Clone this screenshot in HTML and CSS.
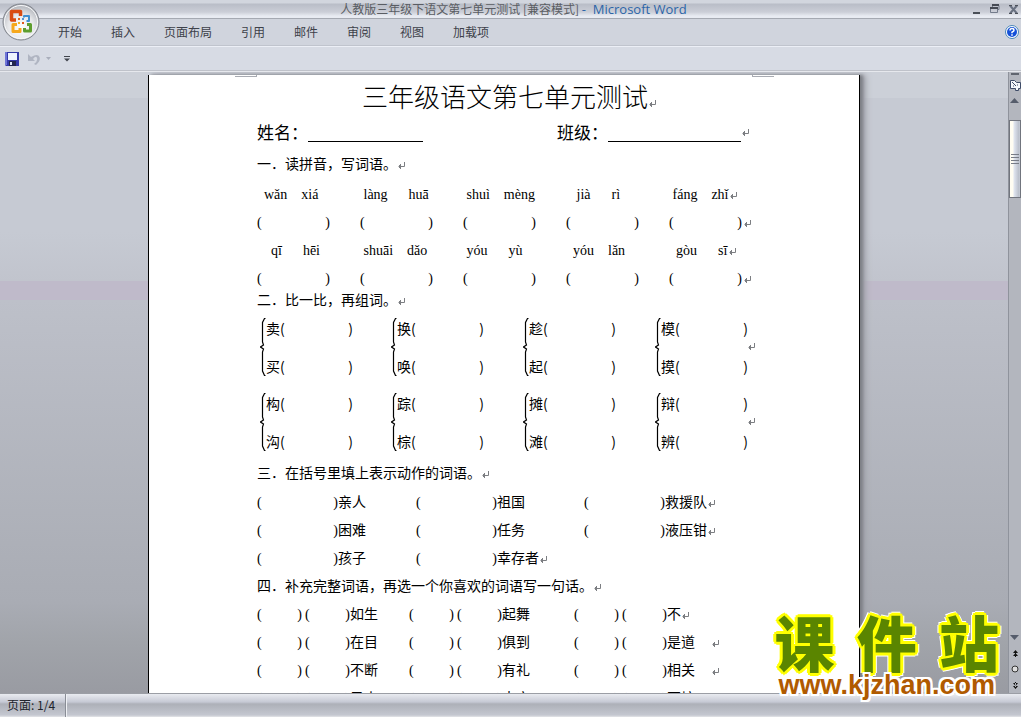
FILE: index.html
```html
<!DOCTYPE html>
<html lang="zh-CN">
<head>
<meta charset="utf-8">
<title>人教版三年级下语文第七单元测试 - Microsoft Word</title>
<link rel="stylesheet" href="styles.css">
</head>
<body>
<svg class="defs" aria-hidden="true">
  <symbol id="ret" viewBox="0 0 8 7"><path d="M7.500 0v4.500H1.500M3.500 2v5M2.500 3v3" fill="none" stroke="#7c7e82"/></symbol>
  <symbol id="brace" viewBox="0 0 6 58"><path d="M5.500 .5H4.500L2.500 4.500V24L3.500 27 .5 29 3.500 31 2.500 34V53L4.500 57.500H5.500" fill="none" stroke="#000" stroke-width="1.200"/></symbol>
</svg>
<div class="app">
  <header class="top">
    <div class="titlebar">
      <h1 class="title">人教版三年级下语文第七单元测试 [兼容模式] <span class="brand">- &nbsp;Microsoft Word</span></h1>
      <div class="controls">
        <button class="plain" aria-label="最小化"><svg width="8" height="10"><path d="M0 8h7v2H0z" fill="#4b5058"/></svg></button>
        <button class="plain" aria-label="还原"><svg width="10" height="10"><path d="M2.500 5V1.500H9V5.500H7.500M.5 4.500h7v4h-7z" fill="none" stroke="#737b8b"/><path d="M2 1h7M0 4h8" stroke="#454a54" stroke-width="2"/></svg></button>
        <button class="plain" aria-label="关闭"><svg width="9" height="9"><path d="M1 .5l7 8M8 .5l-7 8" stroke="#687080" stroke-width="2"/><path d="M0 .5h3M6 .5h3M0 8.500h3M6 8.500h3" stroke="#4b5058"/></svg></button>
      </div>
    </div>
    <nav class="tabs">
      <button class="plain tab">开始</button><button class="plain tab">插入</button><button class="plain tab">页面布局</button><button class="plain tab">引用</button><button class="plain tab">邮件</button><button class="plain tab">审阅</button><button class="plain tab">视图</button><button class="plain tab">加载项</button>
      <button class="plain help" aria-label="帮助"><svg width="14" height="14"><circle cx="7" cy="7" r="6.500" fill="#fff" stroke="#4a86b8"/><circle cx="7" cy="7" r="5" fill="#1450d8"/><path d="M5 5.500Q5 3.500 7 3.500T9 5.200Q9 6.200 7 7.200V8.200M7 9.300v1.500" fill="none" stroke="#fff" stroke-width="1.500"/></svg></button>
    </nav>
    <div class="quick">
      <button class="plain" aria-label="保存"><svg width="14" height="14"><path d="M0 0h14v14H1l-1-1z" fill="#3439a8"/><path d="M0 0h2v13H0z" fill="#6f76d6"/><path d="M3 1h9v7H3z" fill="#eef3ff"/><path d="M4 9h7v5H4z" fill="#22264f"/><path d="M5 10h2v3H5z" fill="#dfe6fa"/></svg></button>
      <button class="plain undo" aria-label="撤消"><svg width="12" height="12"><path d="M0 1v7h7L5 6Q8 2 9 5T6 11L8 12Q13 8 11.500 4T3 4z" fill="#b0b5c2"/></svg></button>
      <button class="plain" aria-label="撤消列表"><svg width="6" height="4"><path d="M0 0h5L2.500 3z" fill="#a9aebb"/></svg></button>
      <button class="plain more" aria-label="自定义"><svg width="6" height="6"><path d="M0 .5h6" stroke="#41454d"/><path d="M0 2.500h6L3 5.500z" fill="#41454d"/></svg></button>
    </div>
    <button class="plain office" aria-label="Office 按钮"><svg width="38" height="38" viewBox="0 0 38 38">
      <defs><radialGradient id="orb" cx=".5" cy=".65" r=".6"><stop offset="0" stop-color="#fff"/><stop offset=".6" stop-color="#e6e7ea"/><stop offset="1" stop-color="#b4b7bd"/></radialGradient></defs>
      <circle cx="19" cy="19" r="18" fill="url(#orb)" stroke="#80848c"/><circle cx="19" cy="19" r="16.500" fill="none" stroke="#f7f8fa"/>
      <g fill="none" stroke-linejoin="round"><path d="M14 17H9.500V8.500H18.500V13" stroke="#d94b12" stroke-width="3.500"/><path d="M22 14.500V13H27V18H24.500" stroke="#3f8fd2" stroke-width="2"/><path d="M15 21.500H11V28.500H18V25" stroke="#f6a81c" stroke-width="3"/><path d="M25 21.500H28.500V28H22.500V25" stroke="#5e9e2e" stroke-width="3"/></g>
      <g fill="#e2661b"><path d="M16 15h2v2h-2z"/><path d="M20 15h2v2h-2z" fill="#4f93d6"/><path d="M16 19h2v2h-2z" fill="#f5b02a"/><path d="M20 19h2v2h-2z" fill="#e35a1c"/></g>
    </svg></button>
  </header>

  <div class="work">
    <main class="canvas">
      <article class="page">
        <i class="crop"></i><i class="crop right"></i>
        <h2 class="doc-title">三年级语文第七单元测试<svg class="ret"><use href="#ret"/></svg></h2>
        <div class="names"><span class="field">姓名：<i class="rule"></i></span><span class="field">班级：<i class="rule long"></i><svg class="ret"><use href="#ret"/></svg></span></div>

        <h3 class="head first">一．读拼音，写词语。<svg class="ret"><use href="#ret"/></svg></h3>
        <p class="row five"><span>  wǎn    xiá</span><span> làng      huā</span><span> shuì    mèng</span><span>   jià      rì</span><span> fáng    zhǐ<svg class="ret"><use href="#ret"/></svg></span></p>
        <p class="row five"><span><b class="blank">( )</b></span><span><b class="blank">( )</b></span><span><b class="blank">( )</b></span><span><b class="blank">( )</b></span><span><b class="blank">( )</b><svg class="ret"><use href="#ret"/></svg></span></p>
        <p class="row five"><span>    qī      hēi</span><span> shuāi    dǎo</span><span> yóu      yù</span><span>  yóu    lǎn</span><span>  gòu      sī<svg class="ret"><use href="#ret"/></svg></span></p>
        <p class="row five"><span><b class="blank">( )</b></span><span><b class="blank">( )</b></span><span><b class="blank">( )</b></span><span><b class="blank">( )</b></span><span><b class="blank">( )</b><svg class="ret"><use href="#ret"/></svg></span></p>

        <h3 class="head tight">二．比一比，再组词。<svg class="ret"><use href="#ret"/></svg></h3>
        <div class="pairs">
          <div class="pair"><svg class="brace"><use href="#brace"/></svg><div class="two"><p>卖<b class="blank">( )</b></p><p>买<b class="blank">( )</b></p></div></div>
          <div class="pair"><svg class="brace"><use href="#brace"/></svg><div class="two"><p>换<b class="blank">( )</b></p><p>唤<b class="blank">( )</b></p></div></div>
          <div class="pair"><svg class="brace"><use href="#brace"/></svg><div class="two"><p>趁<b class="blank">( )</b></p><p>起<b class="blank">( )</b></p></div></div>
          <div class="pair"><svg class="brace"><use href="#brace"/></svg><div class="two"><p>模<b class="blank">( )</b></p><p>摸<b class="blank">( )</b></p></div><svg class="ret"><use href="#ret"/></svg></div>
        </div>
        <div class="pairs">
          <div class="pair"><svg class="brace"><use href="#brace"/></svg><div class="two"><p>构<b class="blank">( )</b></p><p>沟<b class="blank">( )</b></p></div></div>
          <div class="pair"><svg class="brace"><use href="#brace"/></svg><div class="two"><p>踪<b class="blank">( )</b></p><p>棕<b class="blank">( )</b></p></div></div>
          <div class="pair"><svg class="brace"><use href="#brace"/></svg><div class="two"><p>摊<b class="blank">( )</b></p><p>滩<b class="blank">( )</b></p></div></div>
          <div class="pair"><svg class="brace"><use href="#brace"/></svg><div class="two"><p>辩<b class="blank">( )</b></p><p>辨<b class="blank">( )</b></p></div><svg class="ret"><use href="#ret"/></svg></div>
        </div>

        <h3 class="head">三．在括号里填上表示动作的词语。<svg class="ret"><use href="#ret"/></svg></h3>
        <p class="row three"><span><b class="blank">( )</b>亲人</span><span><b class="blank">( )</b>祖国</span><span><b class="blank">( )</b>救援队<svg class="ret"><use href="#ret"/></svg></span></p>
        <p class="row three"><span><b class="blank">( )</b>困难</span><span><b class="blank">( )</b>任务</span><span><b class="blank">( )</b>液压钳<svg class="ret"><use href="#ret"/></svg></span></p>
        <p class="row three"><span><b class="blank">( )</b>孩子</span><span><b class="blank">( )</b>幸存者<svg class="ret"><use href="#ret"/></svg></span></p>

        <h3 class="head low">四．补充完整词语，再选一个你喜欢的词语写一句话。<svg class="ret"><use href="#ret"/></svg></h3>
        <p class="row idiom"><span><b class="blank">( )</b><b class="blank">( )</b>如生</span><span><b class="blank">( )</b><b class="blank">( )</b>起舞</span><span><b class="blank">( )</b><b class="blank">( )</b>不<svg class="ret"><use href="#ret"/></svg></span></p>
        <p class="row idiom"><span><b class="blank">( )</b><b class="blank">( )</b>在目</span><span><b class="blank">( )</b><b class="blank">( )</b>俱到</span><span><b class="blank">( )</b><b class="blank">( )</b>是道<svg class="ret far"><use href="#ret"/></svg></span></p>
        <p class="row idiom"><span><b class="blank">( )</b><b class="blank">( )</b>不断</span><span><b class="blank">( )</b><b class="blank">( )</b>有礼</span><span><b class="blank">( )</b><b class="blank">( )</b>相关<svg class="ret far"><use href="#ret"/></svg></span></p>
        <p class="row idiom"><span><b class="blank">( )</b><b class="blank">( )</b>异士</span><span><b class="blank">( )</b><b class="blank">( )</b>大方</span><span><b class="blank">( )</b><b class="blank">( )</b>不惊<svg class="ret far"><use href="#ret"/></svg></span></p>
      </article>
    </main>
    <aside class="scroll">
      <i class="split"></i>
      <button class="plain ruler" aria-label="标尺"><svg width="12" height="13"><path d="M1.500 2.500h4l2 2h4v6h-2v2h-3v-2h-5z" fill="#f4f6fa" stroke="#3f4c68"/><path d="M3 4l4 4M8 7h1M4 8h1" stroke="#3f4c68"/></svg></button>
      <button class="plain arrow" aria-label="向上滚动"><svg width="10" height="5"><path d="M0 5h9L4.500 0z" fill="#555c6b"/></svg></button>
      <div class="track"><div class="thumb"><i></i><i></i><i></i><i></i></div></div>
      <button class="plain arrow" aria-label="向下滚动"><svg width="10" height="5"><path d="M0 0h9L4.500 5z" fill="#555c6b"/></svg></button>
      <button class="plain nav" aria-label="前一页"><svg width="5" height="7"><path d="M2.500 0L5 3H0zM2.500 3L5 6H0zM2 2h1v5H2z" fill="#111"/></svg></button>
      <button class="plain nav" aria-label="选择浏览对象"><svg width="8" height="8"><circle cx="4" cy="4" r="3" fill="#ddd" stroke="#333"/></svg></button>
      <button class="plain nav" aria-label="下一页"><svg width="5" height="7"><path d="M2.500 4L5 1H0zM2.500 7L5 4H0zM2 0h1v5H2z" fill="#111"/></svg></button>
    </aside>
  </div>

  <footer class="status"><span class="count">页面: 1/4</span></footer>
  <div class="mark"><div class="mark-name"><span>课</span><span>件</span><span>站</span></div><div class="mark-url">www.kjzhan.com</div></div>
</div>
</body>
</html>
```
FILE: styles.css
```css
* { box-sizing: border-box; }
body { margin: 0; font: 12px/16px "Noto Sans CJK SC", sans-serif; color: #3d414a; }
h1, h2, h3, p { margin: 0; font-weight: inherit; font-size: inherit; }
.defs { position: absolute; width: 0; height: 0; }
.plain { display: flex; align-items: center; justify-content: center; margin: 0; padding: 0; border: 0; background: none; color: inherit; font: inherit; }
.app { position: relative; display: flex; flex-direction: column; height: 100vh; overflow: hidden; }

.top { position: relative; background: #d1d5de; }
.titlebar { display: flex; align-items: center; height: 19px; border-bottom: 1px solid #a5a9b2; background: linear-gradient(#d2d6de 0 3px, #b9bdc7 4px, #cbced7 12px, #e8ebf2 16px); }
.title { flex: 1; padding-left: 54px; text-align: center; color: #5a5d63; }
.brand { color: #2c65a8; font: 13px/16px "Open Sans", sans-serif; }
.controls { display: flex; align-items: center; gap: 9px; padding-right: 3px; }
.tabs { display: flex; align-items: center; gap: 29px; height: 27px; padding: 0 2px 0 58px; border-bottom: 1px solid #c0c4cd; background: #d0d4dd; }
.help { margin-left: auto; }
.quick { display: flex; align-items: center; height: 25px; padding-left: 5px; border-top: 1px solid #eceff6; border-bottom: 1px solid #bfc2ca; background: #d7dbe4; }
.undo { margin: 0 6px 0 9px; }
.more { margin-left: 12px; }
.office { position: absolute; left: 2px; top: 3px; }

.work { display: flex; flex: 1; min-height: 0; border-top: 1px solid #e6e8ed; background: linear-gradient(#ccd0d8 0 26px, #c6cad3 26px 160px, #c1c4cd 209px, #bfbaca 209px 228px, #bdc0c9 228px, #a9acb4 530px, #a1a4aa 570px, #999ba2); }
.canvas { flex: 1; display: flex; justify-content: center; padding-top: 3px; overflow: hidden; }
.page { position: relative; width: 712px; height: 1000px; padding: 0 20px 0 108px; border: solid #000; border-width: 0 1px; background: #fff; color: #000; font: 14px/28px "Liberation Serif", "Noto Sans CJK SC", serif; box-shadow: 3px 0 3px #7d7f86, 6px 0 6px #a3a5ac; }
.crop { position: absolute; left: 86px; top: 0; width: 22px; height: 2px; border: solid #a8abb2; border-width: 0 1px 1px 0; }
.crop.right { left: auto; right: 85px; border-width: 0 0 1px 1px; }
.ret { width: 8px; height: 7px; flex: none; }
.doc-title { width: 504px; font: 300 26px/42px "Noto Sans CJK SC", sans-serif; text-align: center; }
.names { display: grid; grid-template-columns: 300px auto; font: 17px/30px "Noto Sans CJK SC", sans-serif; }
.field { display: flex; align-items: center; }
.rule { width: 115px; height: 20px; border-bottom: 1px solid #000; }
.rule.long { width: 133px; }
.head { font-size: 14px; line-height: 30px; font-weight: 400; }
.head.first { padding-top: 2px; line-height: 32px; }
.head.tight { line-height: 16px; }
.head.low { line-height: 28px; }
.row { display: grid; height: 28px; white-space: pre; }
.row > span { display: flex; align-items: center; }
.five { grid-template-columns: repeat(5, 103px); }
.three { grid-template-columns: 159px 168px auto; }
.idiom { grid-template-columns: 152px 165px auto; }
.blank { width: 73px; font-weight: 400; white-space: normal; text-align: justify; text-align-last: justify; }
.five .ret { margin-left: 1px; }
.three .blank { width: 81px; }
.idiom .blank { width: 45px; margin-right: 3px; }
.idiom .blank + .blank { margin-right: 0; }
.far { margin-left: 16px; }
.pairs { display: grid; grid-template-columns: 131px 132px 132px auto; height: 75px; }
.pair { display: flex; align-items: center; padding-left: 3px; }
.brace { width: 6px; height: 58px; }
.two { display: grid; gap: 10px; width: 86px; font-family: "Noto Sans CJK SC", sans-serif; }
.two p { display: flex; }
.two .blank { flex: 1; }

.scroll { display: flex; flex-direction: column; align-items: center; width: 13px; border-left: 1px solid #8f939c; background: #b3b6be; }
.split { width: 8px; height: 2px; margin: 1px 0; background: #60656f; }
.ruler { width: 12px; height: 16px; }
.arrow { height: 16px; }
.track { flex: 1; align-self: stretch; padding-top: 12px; }
.thumb { display: flex; flex-direction: column; align-items: center; justify-content: center; gap: 2px; height: 78px; border: 1px solid #71757e; background: linear-gradient(90deg, #fffdf2 3px, #e1e6f0 4px, #b8bec9 9px, #cdd2dc); }
.thumb i { width: 8px; height: 1px; background: #777c86; }
.nav { height: 16px; }

.status { display: flex; height: 24px; border-top: 1px solid #9b9ea5; background: linear-gradient(#e9ebf0, #c6c9d4 8px, #adb0b8 10px, #c4c7d0 21px, #e4e5e8); }
.count { width: 66px; padding: 3px 0 0 7px; border-right: 1px solid #898d96; color: #20242c; box-shadow: 1px 0 #eef0f4; }

.mark { position: absolute; right: 22px; bottom: 20px; font-weight: 900; }
.mark-name { display: flex; justify-content: space-between; padding-bottom: 4px; color: #5a8500; font-size: 60px; line-height: 56px; text-shadow: 3px 0 #ff0, -3px 0 #ff0, 0 3px #ff0, 0 -3px #ff0, 2px 2px #ff0, -2px 2px #ff0, 2px -2px #ff0, -2px -2px #ff0, 4px 0 #fff, -4px 0 #fff, 0 4px #fff, 0 -4px #fff, 3px 3px #fff, -3px -3px #fff; }
.mark-url { padding: 0 4px; text-align: center; color: #b05a00; font: bold 27px/24px "Liberation Sans", sans-serif; text-shadow: 2px 0 #fff, -2px 0 #fff, 0 2px #fff, 0 -2px #fff, 2px 2px #fff, -2px 2px #fff, 2px -2px #fff, -2px -2px #fff; }
```
